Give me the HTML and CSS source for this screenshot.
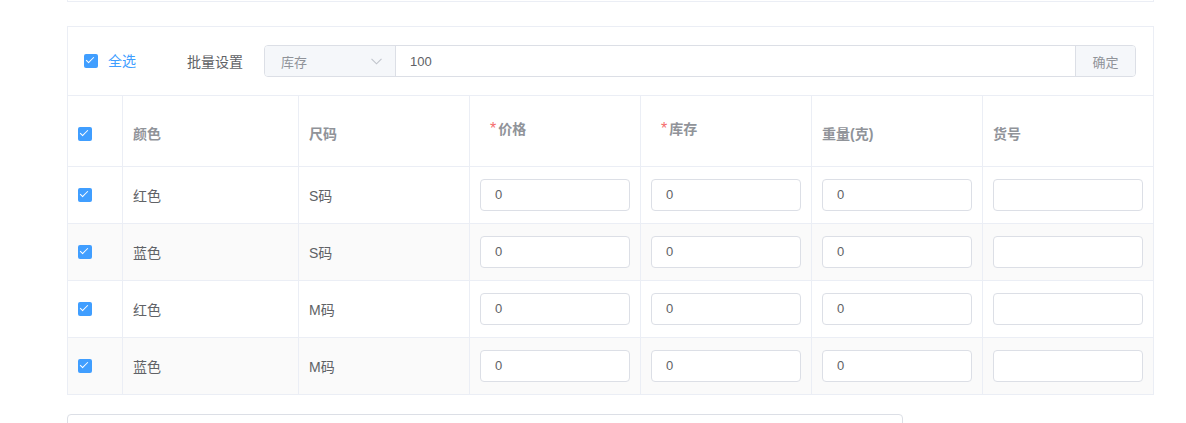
FILE: index.html
```html
<!DOCTYPE html>
<html lang="zh-CN">
<head>
<meta charset="utf-8">
<title>SKU</title>
<link rel="stylesheet" href="styles.css">
</head>
<body>
<div class="page">
  <div class="top-box"></div>

  <div class="sku-panel">
    <div class="toolbar">
      <label class="check-all"><span class="cb"></span><span class="check-label">全选</span></label>
      <span class="batch-label">批量设置</span>
      <div class="input-group">
        <div class="select">
          <span>库存</span>
          <svg class="chev" width="11" height="7" viewBox="0 0 11 7"><path d="M0.5 0.8 L5.5 5.8 L10.5 0.8" fill="none" stroke="#c0c4cc" stroke-width="1.1"/></svg>
        </div>
        <div class="batch-input">100</div>
        <div class="append-btn">确定</div>
      </div>
    </div>

    <div class="grid-row head">
      <div class="cell cb-cell"><span class="cb"></span></div>
      <div class="cell">颜色</div>
      <div class="cell">尺码</div>
      <div class="cell req"><span class="req-label"><i>*</i>价格</span></div>
      <div class="cell req"><span class="req-label"><i>*</i>库存</span></div>
      <div class="cell">重量(克)</div>
      <div class="cell last">货号</div>
    </div>

    <div class="grid-row">
      <div class="cell cb-cell"><span class="cb"></span></div>
      <div class="cell">红色</div>
      <div class="cell">S码</div>
      <div class="cell"><div class="inp">0</div></div>
      <div class="cell"><div class="inp">0</div></div>
      <div class="cell"><div class="inp">0</div></div>
      <div class="cell last"><div class="inp"></div></div>
    </div>
    <div class="grid-row striped">
      <div class="cell cb-cell"><span class="cb"></span></div>
      <div class="cell">蓝色</div>
      <div class="cell">S码</div>
      <div class="cell"><div class="inp">0</div></div>
      <div class="cell"><div class="inp">0</div></div>
      <div class="cell"><div class="inp">0</div></div>
      <div class="cell last"><div class="inp"></div></div>
    </div>
    <div class="grid-row">
      <div class="cell cb-cell"><span class="cb"></span></div>
      <div class="cell">红色</div>
      <div class="cell">M码</div>
      <div class="cell"><div class="inp">0</div></div>
      <div class="cell"><div class="inp">0</div></div>
      <div class="cell"><div class="inp">0</div></div>
      <div class="cell last"><div class="inp"></div></div>
    </div>
    <div class="grid-row striped">
      <div class="cell cb-cell"><span class="cb"></span></div>
      <div class="cell">蓝色</div>
      <div class="cell">M码</div>
      <div class="cell"><div class="inp">0</div></div>
      <div class="cell"><div class="inp">0</div></div>
      <div class="cell"><div class="inp">0</div></div>
      <div class="cell last"><div class="inp"></div></div>
    </div>
  </div>

  <div class="bottom-box"></div>
</div>
</body>
</html>
```

FILE: styles.css
```css
* { box-sizing: border-box; }
html, body { margin: 0; padding: 0; background: #fff; }
body {
  font-family: "Helvetica Neue", "Liberation Sans", "Noto Sans CJK SC", sans-serif;
  font-size: 14px;
  color: #606266;
  overflow: hidden;
}
.page { padding-left: 67px; width: 1186px; height: 423px; overflow: hidden; }

.top-box {
  width: 1087px;
  height: 2px;
  border: 1px solid #ebeef5;
  border-top: none;
  margin-bottom: 24px;
}

.sku-panel {
  width: 1087px;
  border: 1px solid #ebeef5;
}

.toolbar {
  display: flex;
  align-items: center;
  padding: 18px 17px 18px 16px;
  height: 68px;
}
.check-all { display: flex; align-items: center; }
.cb {
  display: inline-block;
  position: relative;
  width: 14px;
  height: 14px;
  border-radius: 2px;
  background: #409eff;
  flex: none;
}
.cb::after {
  content: "";
  position: absolute;
  left: 4px;
  top: 1px;
  width: 3px;
  height: 7px;
  border: 1px solid #fff;
  border-left: 0;
  border-top: 0;
  transform: rotate(45deg);
}
.check-label { color: #409eff; margin-left: 10px; margin-bottom: 2px; }
.batch-label { margin-left: 51px; color: #606266; margin-bottom: 1px; }

.input-group {
  margin-left: 21px;
  flex: 1;
  display: flex;
  height: 32px;
  border: 1px solid #dcdfe6;
  border-radius: 4px;
  overflow: hidden;
}
.select {
  width: 131px;
  background: #f5f7fa;
  border-right: 1px solid #dcdfe6;
  display: flex;
  align-items: center;
  justify-content: space-between;
  padding: 0 13px 0 16px;
  color: #909399;
  font-size: 13px;
}
.chev { margin-top: 1px; }
.batch-input {
  flex: 1;
  display: flex;
  align-items: center;
  padding-left: 14px;
  color: #606266;
  font-size: 13px;
}
.append-btn {
  width: 60px;
  background: #f5f7fa;
  border-left: 1px solid #dcdfe6;
  display: flex;
  align-items: center;
  justify-content: center;
  color: #909399;
  font-size: 13px;
}

.grid-row {
  display: grid;
  grid-template-columns: 55px 176px 171px 171px 171px 171px 169px;
  border-top: 1px solid #ebeef5;
  height: 57px;
}
.grid-row.head { height: 71px; }
.grid-row.head .cell { font-weight: bold; color: #909399; font-size: 14px; padding-top: 5px; }
.grid-row.head .cb-cell { padding-top: 6px; }
.grid-row.striped { background: #fafafa; }

.cell {
  border-right: 1px solid #ebeef5;
  display: flex;
  align-items: center;
  padding-left: 10px;
  padding-bottom: 1px;
  color: #606266;
  font-size: 14px;
}
.grid-row .cb-cell { padding-bottom: 0; }
.cell.last { border-right: none; }
.cb-cell { padding-left: 10px; }
.grid-row.head .cell.req { padding-left: 20px; padding-top: 0; }
.req-label { display: inline-block; margin-bottom: 5px; }
.req-label i {
  font-style: normal;
  color: #f56c6c;
  margin-right: 2px;
  font-weight: normal;
  font-size: 16px;
  line-height: 1;
}

.inp {
  width: 150px;
  height: 32px;
  border: 1px solid #dcdfe6;
  border-radius: 4px;
  background: #fff;
  display: flex;
  align-items: center;
  padding-left: 14px;
  font-size: 13px;
  color: #606266;
}

.bottom-box {
  margin-top: 19px;
  width: 836px;
  height: 40px;
  border: 1px solid #dcdfe6;
  border-radius: 4px;
}
```
